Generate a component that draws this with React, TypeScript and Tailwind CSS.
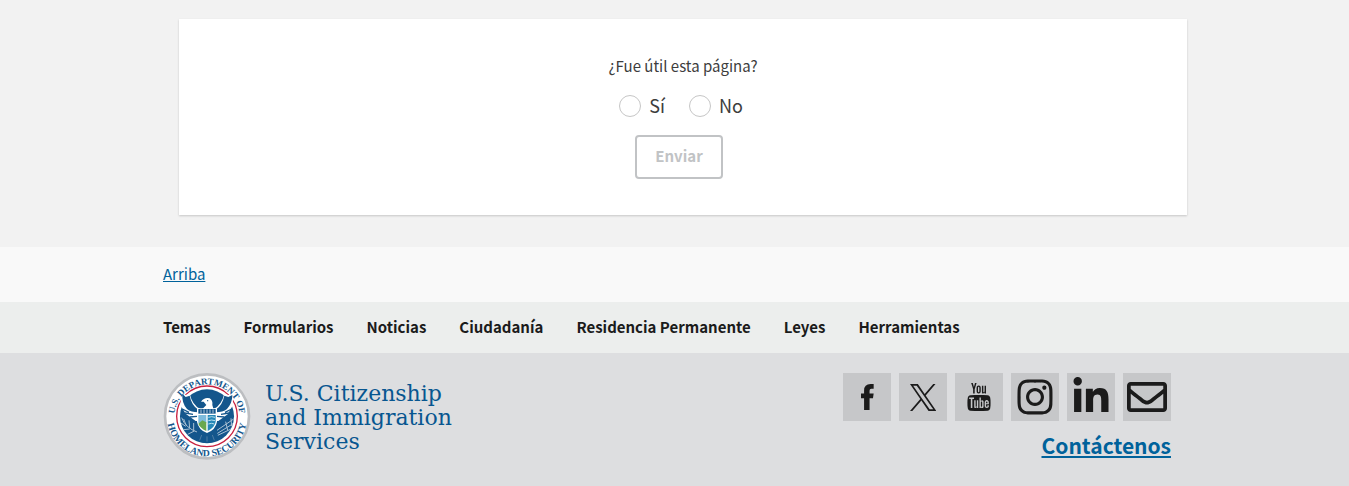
import React from 'react';
import { FaInstagram, FaLinkedinIn, FaRegEnvelope } from 'react-icons/fa';
import { TfiYoutube } from 'react-icons/tfi';

type IconProps = { size: number };

const FacebookIcon: React.FC<IconProps> = ({ size }) => (
  <svg viewBox="0 0 38 76" height={size} fill="currentColor">
    <path d="M37 0 V14 H30 Q25 14 25 20 V28 H37 L35 42 H25 V76 H9 V42 H0 V28 H9 V19 Q9 0 28 0 Z" />
  </svg>
);

const XIcon: React.FC<IconProps> = ({ size }) => (
  <svg viewBox="0 0 1200 1227" height={size} fill="currentColor">
    <path d="M714.163 519.284L1160.89 0H1055.03L667.137 450.887L357.328 0H0L468.492 681.821L0 1226.37H105.866L515.491 750.218L842.672 1226.37H1200L714.137 519.284H714.163ZM569.165 687.828L521.697 619.934L144.011 79.6944H306.615L611.412 515.685L658.88 583.579L1055.08 1150.3H892.476L569.165 687.854V687.828Z" />
  </svg>
);

const navLinks = [
  'Temas',
  'Formularios',
  'Noticias',
  'Ciudadanía',
  'Residencia Permanente',
  'Leyes',
  'Herramientas'
];

const socialLinks = [
  { label: 'Facebook', icon: FacebookIcon, size: 26 },
  { label: 'X', icon: XIcon, size: 27 },
  { label: 'YouTube', icon: TfiYoutube, size: 28 },
  { label: 'Instagram', icon: FaInstagram, size: 40 },
  { label: 'LinkedIn', icon: FaLinkedinIn, size: 40 },
  { label: 'Email', icon: FaRegEnvelope, size: 40 }
];

const Seal: React.FC = () => (
  <svg viewBox="0 0 264 264" className="size-[88px] shrink-0" role="img" aria-label="U.S. Department of Homeland Security">
    <defs>
      <path id="seal-top" d="M 36 152 A 98 98 0 1 1 228 152" />
      <path id="seal-bottom" d="M 17 96 A 120 120 0 1 0 247 96" />
    </defs>
    <circle cx="132" cy="130" r="126" fill="#fff" stroke="#bcbec1" strokeWidth="8" />
    <circle cx="132" cy="130" r="91" fill="none" stroke="#c8203f" strokeWidth="4" />

    {/* Disc */}
    <circle cx="132" cy="130" r="81" fill="#14568c" />

    {/* Wings */}
    <path d="M56 58 L68 66 L80 62 Q88 96 112 108 L152 108 Q176 96 184 62 L196 66 L212 62 L208 100 L194 124 L166 144 L98 144 L68 122 L52 96 Z" fill="#fff" />
    <path d="M58 62 L68 72 L80 68 Q86 98 106 110 L106 118 Q84 118 72 108 Q56 90 58 62 Z" fill="#14568c" />
    <path d="M208 66 L196 72 L184 68 Q178 98 158 110 L158 118 Q180 118 192 108 Q208 90 208 66 Z" fill="#14568c" />
    <path d="M94 64 Q132 42 170 64 Q166 90 148 100 L116 100 Q98 90 94 64 Z" fill="#14568c" />
    <g stroke="#14568c" strokeWidth="4" fill="none">
      <path d="M58 108 L78 118 M66 120 L90 124 M80 132 L102 130 M206 108 L186 118 M198 120 L174 124 M184 132 L162 130" />
    </g>

    {/* Head */}
    <path d="M114 86 Q124 72 140 76 Q150 82 148 96 L152 110 H116 L130 96 L122 86 Z" fill="#fff" />
    <circle cx="134" cy="83" r="2" fill="#14568c" />

    {/* Olive branch and arrows */}
    <g stroke="#a9c0d3" strokeWidth="3" fill="none">
      <path d="M56 134 Q66 164 104 178 M54 150 L68 160 M62 138 L70 158 M78 142 L80 166 M62 170 L80 168 M92 150 L92 172 M74 184 L94 174" />
      <path d="M212 138 L162 172 M210 152 L162 182 M204 168 L162 188 M204 136 L206 160 M188 146 L194 172" />
    </g>

    {/* Tail */}
    <path d="M104 168 L132 184 L160 168 L166 194 Q150 210 132 210 Q114 210 98 194 Z" fill="#14568c" />
    <path d="M116 186 L110 202 M132 190 V206 M148 186 L154 202" stroke="#6c91b0" strokeWidth="2" fill="none" />

    {/* Shield */}
    <path d="M102 106 H162 V146 Q158 170 132 180 Q106 170 102 146 Z" fill="#fff" />
    <path d="M106 108 H158 V122 H106 Z" fill="#14568c" />
    <path d="M114 109 V121 M123 109 V121 M132 109 V121 M141 109 V121 M150 109 V121" stroke="#fff" strokeWidth="2" />
    <path d="M106 126 H130 V150 H106 Z" fill="#7dbbdc" />
    <path d="M134 126 H158 V146 Q156 162 134 174 Z" fill="#2688b8" />
    <path d="M106 152 L118 142 L130 148 V174 Q110 164 106 152 Z" fill="#69a84f" />
    <path d="M136 133 Q146 129 156 133 M136 143 Q146 139 156 143 M136 153 Q146 149 154 153" stroke="#bce1ed" strokeWidth="3" fill="none" />

    <g fill="#14568c" fontFamily="'Liberation Serif', serif" fontWeight="700" fontSize="27" textAnchor="middle">
      <text>
        <textPath href="#seal-top" startOffset="50%">U.S. DEPARTMENT OF</textPath>
      </text>
      <text fontSize="29">
        <textPath href="#seal-bottom" startOffset="50%">HOMELAND SECURITY</textPath>
      </text>
    </g>
  </svg>
);

const Feedback: React.FC = () => (
  <main className="bg-[#f2f2f2] pt-[19px] pb-8 pl-[17px]">
    <form
      className="mx-auto flex max-w-[1008px] flex-col items-center bg-white py-9 text-[#3d3d3d] shadow-[0_1px_2px_rgba(0,0,0,0.18)]"
      onSubmit={(e) => e.preventDefault()}
    >
      <fieldset className="flex flex-col items-center">
        <legend className="mx-auto text-[15px] leading-[22px]">¿Fue útil esta página?</legend>
        <div className="mt-[18px] mr-1 flex gap-6 text-lg leading-5">
          <label className="flex items-start gap-2">
            <input type="radio" name="helpful" value="si" className="size-[22px] appearance-none rounded-full border border-[#c6c6c6] bg-white checked:border-[7px] checked:border-[#005ea2]" />
            Sí
          </label>
          <label className="flex items-start gap-2">
            <input type="radio" name="helpful" value="no" className="size-[22px] appearance-none rounded-full border border-[#c6c6c6] bg-white checked:border-[7px] checked:border-[#005ea2]" />
            No
          </label>
        </div>
      </fieldset>
      <button
        type="submit"
        disabled
        className="mt-[18px] mr-2 h-11 rounded border-2 border-[#c1c3c5] bg-white px-[18px] pb-[2px] text-[15px] font-bold leading-5 text-[#c1c3c5]"
      >
        Enviar
      </button>
    </form>
  </main>
);

const Footer: React.FC = () => (
  <footer>
    <div className="bg-[#f9f9f9] pr-[15px]">
      <div className="mx-auto flex h-[55px] max-w-[1008px] items-center pb-[2px]">
        <a href="#top" className="text-[15px] leading-6 text-[#00629b] underline">
          Arriba
        </a>
      </div>
    </div>

    <nav className="bg-[#eceeed] pr-[15px]">
      <ul className="mx-auto flex min-h-[51px] max-w-[1008px] flex-wrap items-center gap-x-[33px] pb-[2px]">
        {navLinks.map((link) => (
          <li key={link}>
            <a href="#" className="block text-[15px] font-bold leading-6 text-[#1b1b1b]">
              {link}
            </a>
          </li>
        ))}
      </ul>
    </nav>

    <div className="bg-[#dddee0] pr-[15px]">
      <div className="mx-auto flex max-w-[1008px] flex-wrap justify-between pt-5 pb-[25px]">
        <a href="#" className="flex items-center gap-[14px]">
          <Seal />
          <span className="pt-[2px] font-['DejaVu_Serif',serif] text-[22px] leading-6 text-[#075690]">
            U.S. Citizenship
            <br />
            and Immigration
            <br />
            Services
          </span>
        </a>

        <div className="flex flex-col items-end gap-2">
          <ul className="flex gap-2">
            {socialLinks.map(({ label, icon: Icon, size }) => (
              <li key={label}>
                <a href="#" aria-label={label} className="flex size-12 items-center justify-center bg-[#c6c7c9] text-[#1b1b1b]">
                  <Icon size={size} />
                </a>
              </li>
            ))}
          </ul>
          <a href="#" className="text-[21px] font-bold leading-8 text-[#00629b] underline">
            Contáctenos
          </a>
        </div>
      </div>
    </div>
  </footer>
);

const App: React.FC = () => (
  <div className="min-h-screen bg-[#dddee0] font-['Noto_Sans_CJK_SC',sans-serif]">
    <Feedback />
    <Footer />
  </div>
);

export default App;
